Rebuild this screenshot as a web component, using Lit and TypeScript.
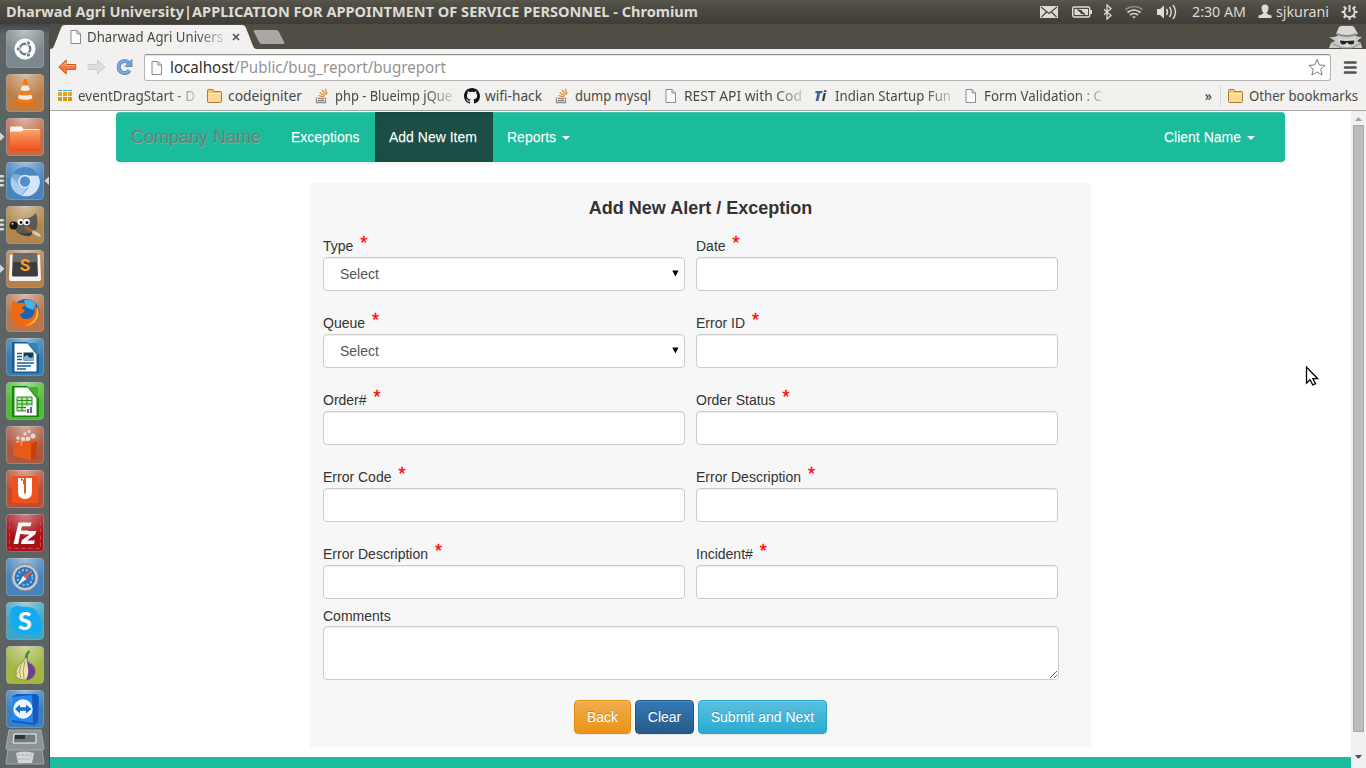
import { LitElement, html, css, svg, nothing, TemplateResult } from 'lit';
import { customElement, property } from 'lit/decorators.js';

/** Text run set to an exact width, used by the desktop and browser chrome. */
const run = (text: string, width: number, cls: string, tail = '') => html`
  <svg class="run ${cls}" width=${width} height="20">
    <text x="0" y="15" textLength=${width} lengthAdjust="spacingAndGlyphs">${text}${tail ? svg`<tspan class="tail">${tail}</tspan>` : nothing}</text>
  </svg>`;

const pageIcon = html`<svg width="16" height="16" viewBox="0 0 16 16"><path d="M3 1.500h6l3.500 3.500v9.500h-9.500z" fill="#fbfbfb" stroke="#8b8b8b"/><path d="M9 1.500v3.500h3.500" fill="none" stroke="#8b8b8b"/></svg>`;

const bookmarkIcons: Record<string, TemplateResult> = {
  page: pageIcon,
  grid: html`<svg width="16" height="16" viewBox="0 0 16 16"><g fill="#25a8dc"><path d="M1 2h4v1h-4zM6 2h4v1h-4zM11 2h4v1h-4z"/></g><g fill="#e3a81c"><path d="M1 4h4v4h-4zM6 4h4v4h-4zM11 4h4v4h-4z"/><path fill="#d39a0e" d="M1 9h4v4h-4zM6 9h4v4h-4zM11 9h4v4h-4z"/></g></svg>`,
  folder: html`<svg width="16" height="16" viewBox="0 0 16 16"><path d="M.5 13.500v-11q0-1 1-1h4q1 0 1 1v1h7q1 0 1 1v9q0 1-1 1h-12q-1 0-1-1z" fill="#f5c26f" stroke="#a97b35"/><path d="M1 6.500q0-1 1-1h12v8.500h-13z" fill="#fbd894"/><path d="M1 5.500h13" stroke="#ffeec6"/></svg>`,
  stack: html`<svg width="16" height="16" viewBox="0 0 16 16" fill="none"><path d="M2.500 9.500v5h9v-5" stroke="#8c8c8c" stroke-width="1.300"/><path d="M4 12.500h6" stroke="#777" stroke-width="1.200"/><path d="M4 10.200l6 .6" stroke="#9a8265" stroke-width="1.200"/><path d="M4.400 7.500l5.800 1.600" stroke="#c2864b" stroke-width="1.200"/><path d="M5.600 4.500l5.200 3.200M8 2l3.800 4.600M11.300.6l1.700 5.400" stroke="#f08a24" stroke-width="1.300"/></svg>`,
  github: html`<svg width="16" height="16" viewBox="0 0 16 16"><path fill="#161514" d="M8 0C3.580 0 0 3.580 0 8c0 3.540 2.290 6.530 5.470 7.590.4.070.55-.17.55-.38 0-.19-.01-.82-.01-1.490-2.010.37-2.530-.49-2.690-.94-.09-.23-.48-.94-.82-1.130-.28-.15-.68-.52-.01-.53.63-.01 1.080.58 1.230.82.72 1.210 1.870.87 2.330.66.070-.52.28-.87.510-1.070-1.780-.2-3.640-.89-3.640-3.950 0-.87.310-1.590.82-2.150-.08-.2-.36-1.020.08-2.120 0 0 .67-.21 2.200.82.640-.18 1.320-.27 2-.27s1.360.09 2 .27c1.530-1.040 2.200-.82 2.200-.82.440 1.100.16 1.920.08 2.120.510.56.82 1.270.82 2.150 0 3.070-1.870 3.750-3.650 3.950.290.25.540.73.540 1.480 0 1.070-.01 1.930-.01 2.200 0 .21.150.46.550.38A8.010 8.010 0 0 0 16 8c0-4.420-3.580-8-8-8z"/></svg>`,
  ti: html`<span class="ti"><b>T</b>i</span>`,
};

interface Bookmark { icon: string; text: string; width: number; cut?: boolean }
const bookmarks: Bookmark[] = [
  { icon: 'grid', text: 'eventDragStart - D', width: 117, cut: true },
  { icon: 'folder', text: 'codeigniter', width: 74 },
  { icon: 'stack', text: 'php - Blueimp jQue', width: 117, cut: true },
  { icon: 'github', text: 'wifi-hack', width: 57 },
  { icon: 'stack', text: 'dump mysql', width: 76 },
  { icon: 'page', text: 'REST API with Cod', width: 118, cut: true },
  { icon: 'ti', text: 'Indian Startup Fun', width: 116, cut: true },
  { icon: 'page', text: 'Form Validation : C', width: 118, cut: true },
];

interface Tile { bg: string; art: TemplateResult; marks?: number; active?: boolean }
const tiles: Tile[] = [
  { bg: '#78868b', art: svg`<circle cx="19" cy="19" r="10.500" fill="#fff"/><circle cx="19" cy="19" r="5.200" fill="none" stroke="#6f7c81" stroke-width="2.400"/><g fill="#6f7c81" stroke="#fff" stroke-width="1"><circle cx="12.200" cy="19" r="2.100"/><circle cx="22.400" cy="13" r="2.100"/><circle cx="22.400" cy="25" r="2.100"/></g>` },
  { bg: '#b97a42', art: svg`<path d="M8 27h22l2 4.500h-26z" fill="#e96f0c"/><path d="M18 5h2.500l7 22q-8 4-16 0z" fill="#f27c12"/><path d="M16 11.500h6.500l1.500 4.500q-5 2-9.500 0z" fill="#ececec"/><path d="M13 20.500q6 2 12.300 0l1.200 3.700q-7 3-14.600 0z" fill="#ececec"/>` },
  { bg: '#bd6947', marks: 1, art: svg`<path d="M4 10q0-1.500 1.500-1.500h10l2 2.500h15q1.500 0 1.500 1.500v3h-30z" fill="#fff" opacity=".9"/><path d="M4 15q0-1.500 1.500-1.500h10l2-1.500h15.500q1.500 0 1.500 1.500l-.5 18q0 1.500-1.500 1.500h-27q-1.500 0-1.500-1.500z" fill="url(#fold)"/>` },
  { bg: '#4180bd', marks: 3, active: true, art: svg`<circle cx="19" cy="20" r="14" fill="#7eaede"/><path d="M5.500 15a14 14 0 0 0 10 18.600l5-8.200-7-2z" fill="#abcdef"/><path d="M19 13.500h13a14 14 0 0 1-16 20.200l7.500-9z" fill="#d3e5f8"/><path d="M7 12a14 14 0 0 1 25 1.500h-13z" fill="#4d88c5"/><circle cx="19" cy="19.500" r="6" fill="#4f8fd2" stroke="#dbeafb" stroke-width="1.700"/>` },
  { bg: '#ae8345', marks: 3, art: svg`<path d="M9 17l-3-1q9 1 13-4 6 1 11-5 3 10 0 17-6 7-15 4-6-2-7-8z" fill="#5c5a55"/><path d="M10 25q9 5 19 0l-5 5q-8 1-14-5z" fill="#403e3a"/><circle cx="14.500" cy="16" r="3" fill="#fff"/><circle cx="20.500" cy="16" r="3.300" fill="#fff"/><circle cx="15" cy="16.500" r="1.400"/><circle cx="21" cy="16.500" r="1.500"/><ellipse cx="7.500" cy="19.500" rx="4" ry="4" fill="#151515"/><circle cx="6.500" cy="17.800" r="1" fill="#ddd"/><path d="M19 21l9 5" stroke="#b5651d" stroke-width="2.500"/><path d="M27 24l7 4 1 3-4-1-5-3z" fill="#c9ccce"/>` },
  { bg: '#b87c44', marks: 1, art: svg`<path d="M4 5h30l1 24q0 2-2 2h-28q-2 0-2-2z" fill="#f4f4f4"/><path d="M7 3h24l1 22q0 1.500-1.500 1.500h-23q-1.500 0-1.500-1.500z" fill="#3d3d3d"/><path d="M7 3h24l.6 9h-25z" fill="#6a6a6a"/><text x="19" y="21" text-anchor="middle" font-family="Roboto" font-weight="700" font-size="17" fill="#ff9a2e">S</text>` },
  { bg: '#b9714a', art: svg`<circle cx="20" cy="18.500" r="13.500" fill="#1c63b4"/><path d="M18 6q7-2 12 4l-3 6-7-3z" fill="#47b5e9"/><path d="M6 10l1-5q2 4 6 4 5-1 8 2-5 1-5 4l3 1q-2 4-5 4 0 5 6 5 6 0 8-5 2-5-1-9 9 6 5 14-4 8-13 8-12 0-14-12-.500-6 1-11z" fill="#ee6a12"/><path d="M31 12q3 6 0 13-4 7-12 7 9-4 11-10 1-4 1-10z" fill="#fdbb2b"/>` },
  { bg: '#2f79ae', art: svg`<path d="M6 4h15l12 12v19h-27z" fill="#135a8e"/><path d="M8.500 5.500h13l9 11v17h-22z" fill="#fff"/><path d="M22 5h10v12z" fill="#2e84bb"/><path d="M11 15.500h5M11 18.500h5M11 21.500h5M11 25h17M11 28h14M11 31h9" stroke="#1a5d90" stroke-width="1.300"/><rect x="17.500" y="14.500" width="10" height="8" fill="#173951"/><path d="M18 19l3-2 3 3 3-1v3h-9z" fill="#7bb9dc"/>` },
  { bg: '#4bbb2f', art: svg`<path d="M6 4h15l12 12v19h-27z" fill="#14850e"/><path d="M8.500 5.500h13l9 11v17h-22z" fill="#fff"/><path d="M22 5h10v12z" fill="#43b22c"/><rect x="11" y="15" width="15" height="14" fill="#bfe4b2"/><path d="M11 15h15v14h-15zM11 18.500h15M11 22h15M11 25.500h15M16 15v14M21 15v14" fill="none" stroke="#278d1d"/><rect x="20" y="23.500" width="7" height="8" fill="#eee"/><path d="M21 31v-4h2v4z" fill="#d43b28"/><path d="M24 31v-6h2v6z" fill="#3a74c8"/>` },
  { bg: '#ab5439', art: svg`<g fill="#e3d8d3"><circle cx="12" cy="12" r="1.800"/><circle cx="19" cy="8" r="1.800"/><circle cx="23" cy="5.500" r="1.500"/><circle cx="27" cy="10" r="2.500"/><circle cx="17" cy="13" r="2.300"/><circle cx="22" cy="13" r="2.400"/><circle cx="12" cy="17" r="2"/></g><path d="M7 17l22-3 2 2-1 17-5 1-18-4z" fill="#e85a1a"/><path d="M25 18l6-3-1 18-5 1z" fill="#c4430c"/><path d="M15 20q0-7 5-5" fill="none" stroke="#fbb18a"/>` },
  { bg: '#bd472a', art: svg`<rect x="6" y="6" width="26" height="27" rx="1.500" fill="#f2501f"/><path d="M12 8v14q0 7 7 7t7-7v-14h-6v14q0 2-1 2t-1-2v-14z" fill="#fff"/><path d="M15 8l3 2v4h-1v-4l-2 1z" fill="#f2501f"/>` },
  { bg: '#a80a10', art: svg`<rect x="3.500" y="3.500" width="31" height="31" fill="none" stroke="#d85a5a" stroke-width=".8" stroke-dasharray="4 3"/><path d="M12.500 8.500h13l-1 3.700h-8.500l-1 4.300h7l-.8 3.500h-7l-2 10h-4.700z" fill="#fff"/><path d="M17.500 17h12.500l-.7 3.200-8 6.300h7.500l-.8 3.500h-13l.8-3.800 7.700-5.700h-6z" fill="#fff"/>` },
  { bg: '#3e80bd', art: svg`<circle cx="19" cy="19.500" r="13.500" fill="#c5c9cc" stroke="#787e83" stroke-width="1"/><circle cx="19" cy="19.500" r="10.500" fill="#2d74bd"/><circle cx="19" cy="19.500" r="7.500" fill="none" stroke="#91c3ea" stroke-width="2" stroke-dasharray="2 2"/><path d="M27 11l-6.500 10-3.500-3z" fill="#e95a36"/><path d="M11 28l6-10 3.500 3z" fill="#eef4f8"/>` },
  { bg: '#37a3c5', art: svg`<path d="M6 6q5-4 10-1 17-2 18 14 3 6-1 12-5 4-11 1-18 1-17-14-2-7 1-12z" fill="#11acef"/><text x="19" y="28" text-anchor="middle" font-family="Lato" font-weight="900" font-size="25" fill="#fff">S</text>` },
  { bg: '#a1b33c', art: svg`<path d="M19 12q0-5 4-8l1 2q-3 3-2 7z" fill="#3d8938"/><path d="M20 11q1 4 6 7 4 4 3 9-2 7-10 7-9 0-10-7 0-5 5-9 5-4 6-7z" fill="#e9e5a5" stroke="#7f7a43" stroke-width=".7"/><path d="M20 12q1 4 6 6.500 4 4 3 9-2 6-9 6.500 3-6 2-12-.500-5-2-10z" fill="#6c4290"/><path d="M18 14q-7 9-3 18M19 15q-3 9-1 18M17 15q-9 7-6 14" stroke="#9c9859" fill="none" stroke-width=".9"/>` },
  { bg: '#347bc0', art: svg`<path d="M6 6l5-2h20l2 3-1 25-4 3-22-3z" fill="#1559bd"/><path d="M6 7l20-2 1 28-21-3z" fill="#2688ee"/><circle cx="17" cy="19" r="9.700" fill="#eef5fc"/><path d="M9 19l5-4.500v2.800h6v-2.800l5.500 4.500-5.500 4.500v-2.800h-6v2.800z" fill="#1b6dcc"/>` },
];

@customElement('unity-launcher')
class UnityLauncher extends LitElement {
  static styles = css`
    :host { display: flex; flex-direction: column; width: 49px; border-right: 1px solid #43474a; background: linear-gradient(#424749, #5c6465 10px, #5c6363); box-sizing: content-box; overflow: hidden; padding-top: 6px; height: 738px; }
    .slot { height: 44px; flex: none; }
    .slot.last { height: 39px; }
    svg { display: block; }
  `;
  render() {
    return html`
      ${tiles.map((t, i) => html`<div class="slot ${i === 15 ? 'last' : ''}">
        <svg width="49" height="39" viewBox="-6 0 49 39">
          <defs>
            <radialGradient id="sheen" cx=".5" cy="0" r=".65"><stop offset="0" stop-color="#fff" stop-opacity=".5"/><stop offset="1" stop-color="#fff" stop-opacity=".03"/></radialGradient>
            <linearGradient id="fold" x2="0" y2="1"><stop offset="0" stop-color="#fda26a"/><stop offset="1" stop-color="#ee4d17"/></linearGradient>
          </defs>
          <rect x=".5" y=".5" width="37" height="37" rx="3.500" fill=${t.bg} stroke="#fff" stroke-opacity=".22"/>
          <rect width="38" height="38" rx="4" fill="url(#sheen)"/>
          ${t.art}
          ${t.marks === 1 ? svg`<path d="M-6 14.500l4.500 4.200-4.500 4.200z" fill="#d6d8d8"/>` : nothing}
          ${t.marks === 3 ? svg`<path d="M-6 13h3l1.500 1.200-1.500 1.200h-3zM-6 17.500h3l1.500 1.200-1.500 1.200h-3zM-6 22h3l1.500 1.200-1.500 1.200h-3z" fill="#d6d8d8"/>` : nothing}
          ${t.active ? svg`<path d="M43 14.500l-4.500 4.200 4.500 4.200z" fill="#d6d8d8"/>` : nothing}
        </svg></div>`)}
      <svg width="49" height="39" viewBox="0 0 49 39">
        <path d="M9 1h32l3 18q0 2-2 2h-34q-2 0-2-2z" fill="#8b9496" stroke="#a4acad"/>
        <path d="M14 5h22v9h-23z" fill="#717a7d" stroke="#f3f3f3"/><path d="M15 6h10v4h-10z" fill="#303638"/>
        <path d="M8 21h34l2 14h-38z" fill="#7d8789" stroke="#a0a7a8"/><path d="M16 24q8-3 18 0l-2 10h-14z" fill="#d3d5d6"/><path d="M17 26h15M18 30h13" stroke="#aaaeb0" stroke-dasharray="3 1"/>
      </svg>`;
  }
}

@customElement('form-field')
class FormField extends LitElement {
  @property() label = '';
  @property({ type: Boolean }) select = false;
  static styles = css`
    :host { display: block; font: 14px/20px "Liberation Sans", Arial, sans-serif; color: #333; }
    .label { display: flex; height: 20px; line-height: 18px; gap: 7px; }
    .star { color: #f00; font-size: 18px; line-height: 13px; -webkit-text-stroke: .3px #f00; }
    .box { position: relative; height: 34px; }
    .control { display: block; box-sizing: border-box; width: 100%; height: 34px; margin: 0; padding: 6px 16px; border: 1px solid #ccc; border-radius: 4px; background: #fff; box-shadow: inset 0 1px 1px rgba(0,0,0,.075); font: inherit; color: #555; appearance: none; outline: none; }
    .caret { position: absolute; right: 6px; top: 13px; }
  `;
  render() {
    return html`<div class="label"><span>${this.label}</span><span class="star">*</span></div>
      <div class="box">${this.select
        ? html`<select class="control"><option>Select</option></select><svg class="caret" width="7" height="7"><path d="M.3.500h6.200l-3.100 6z"/></svg>`
        : html`<input class="control" type="text">`}</div>`;
  }
}

const fields = [
  { label: 'Type', select: true }, { label: 'Date' },
  { label: 'Queue', select: true }, { label: 'Error ID' },
  { label: 'Order#' }, { label: 'Order Status' },
  { label: 'Error Code' }, { label: 'Error Description' },
  { label: 'Error Description' }, { label: 'Incident#' },
];

@customElement('app-root')
class AppRoot extends LitElement {
  static styles = css`
    :host { display: flex; flex-direction: column; width: 1366px; height: 768px; overflow: hidden; background: #fff; position: relative; font-family: "Liberation Sans", Arial, sans-serif; }
    svg { display: block; flex: none; }
    .run { overflow: visible; font-family: "Noto Sans", "Open Sans", sans-serif; font-size: 14px; fill: #4a4945; }
    .panel { display: flex; align-items: center; height: 24px; flex: none; padding: 0 8px 0 6px; background: linear-gradient(#5a584b, #504e45 4px, #3e3d38); gap: 12px; }
    .run.title { font-weight: 700; font-size: 13.500px; fill: #dfdbd2; }
    .run.light { fill: #dfdbd2; }
    .fill { flex: 1; }
    .user { display: flex; align-items: center; gap: 4px; }
    .desktop { display: flex; flex: 1; }
    .browser { display: flex; flex-direction: column; width: 1316px; }
    .tabs { display: flex; height: 25px; background: #504d45; }
    .tab { position: relative; width: 205px; height: 25px; display: flex; }
    .shape { position: absolute; left: 0; top: 0; }
    .inner { position: relative; display: flex; align-items: center; padding: 1px 0 0 18px; height: 24px; }
    .fade { -webkit-mask-image: linear-gradient(90deg, #000 calc(100% - 26px), rgba(0,0,0,.25)); mask-image: linear-gradient(90deg, #000 calc(100% - 26px), rgba(0,0,0,.25)); }
    .inner .fade { margin: 0 9px 0 3px; }
    .toolbar { display: flex; align-items: center; height: 36px; background: #f2f1f0; padding: 0 7px 0 8px; }
    .toolbar .nav { margin-right: 10px; }
    .omnibox { display: flex; align-items: center; box-sizing: border-box; width: 1187px; height: 27px; border: 1px solid #b5b3b0; border-top-color: #949290; border-radius: 3px; background: #fff; padding: 0 4px; margin: 1px 12px 0 1px; box-shadow: inset 0 1px 1px #e4e4e4; }
    .run.url { font-size: 16px; fill: #2f2f2f; margin-left: 5px; }
    .tail { fill: #949494; }
    .marks { display: flex; align-items: center; box-sizing: border-box; height: 26px; background: #f2f1f0; border-bottom: 1px solid #a9a7a4; padding: 0 8px 4px 7px; gap: 12px; }
    .mark { display: flex; align-items: center; gap: 5px; }
    .ti { width: 16px; font: italic bold 14px/16px "Open Sans", sans-serif; color: #333; }
    .ti b { color: #3b63a4; }
    .more { font: 14px/16px "Noto Sans", sans-serif; color: #333; margin-right: -4px; }
    .sep { width: 1px; height: 21px; background: #d3d9df; margin-right: -5px; }
    .view { display: flex; flex: 1; height: 657px; }
    .page { display: flex; flex-direction: column; width: 1301px; padding-top: 1px; }
    .navbar { display: flex; margin: 0 66px; width: 1169px; height: 50px; background: #1bbc9b; border-radius: 4px; box-shadow: inset 0 1px 0 rgba(255,255,255,.15), 0 1px 5px rgba(0,0,0,.075); text-shadow: 0 1px 0 rgba(255,255,255,.25); font-size: 14px; line-height: 20px; color: #fff; box-sizing: border-box; padding-right: 15px; }
    .brand { padding: 15px; font-size: 18px; color: #777; width: 130px; white-space: nowrap; }
    .item { display: flex; align-items: center; padding: 0 15px 0 14px; height: 50px; gap: 6px; box-sizing: border-box; white-space: nowrap; }
    .item.first { padding: 0 0 0 15px; width: 99px; }
    .item.on { width: 118px; background: #1b4f45; box-shadow: inset 0 3px 9px rgba(0,0,0,.075); }
    .caret { border: 4px solid transparent; border-top-color: #fff; border-bottom: 0; margin-top: 2px; }
    .card { box-sizing: border-box; width: 781px; height: 564px; margin: 21px 0 0 260px; background: #f7f7f7; padding: 14px 13px 13px; color: #333; font-size: 14px; line-height: 20px; }
    .heading { margin: 0 0 20px; font-size: 18px; line-height: 22px; height: 20px; text-align: center; font-weight: bold; }
    .grid { display: grid; grid-template-columns: 362px 362px; column-gap: 11px; row-gap: 23px; }
    .comments { margin-top: 7px; }
    .comments textarea { display: block; box-sizing: border-box; width: 736px; height: 54px; border: 1px solid #ccc; border-radius: 4px; margin: 0; background: #fff; box-shadow: inset 0 1px 1px rgba(0,0,0,.075); outline: none; }
    .buttons { display: flex; justify-content: center; gap: 4px; margin-top: 20px; }
    .btn { box-sizing: border-box; height: 34px; padding: 6px 0; border: 1px solid; border-radius: 4px; color: #fff; font: 14px/20px "Liberation Sans", Arial, sans-serif; text-shadow: 0 -1px 0 rgba(0,0,0,.2); box-shadow: inset 0 1px 0 rgba(255,255,255,.15), 0 1px 1px rgba(0,0,0,.075); }
    .back { width: 57px; background: linear-gradient(#f0ad4e, #eb9316); border-color: #e38d13; }
    .clear { width: 59px; background: linear-gradient(#337ab7, #265a88); border-color: #245580; }
    .submit { width: 129px; background: linear-gradient(#5bc0de, #2aabd2); border-color: #28a4c9; }
    .footer { height: 11px; margin-top: 10px; background: #1bbc9b; }
    .scroll { display: flex; flex-direction: column; align-items: center; justify-content: flex-start; width: 15px; background: #f1f1f1; box-sizing: border-box; padding: 5px 2px 4px; }
    .thumb { width: 11px; height: 607px; box-sizing: border-box; background: #bcbcbc; border: 1px solid #a8a8a8; margin: 3px 0 22px; }
    .cursor { position: absolute; left: 1305px; top: 365px; }
  `;

  render() {
    return html`
      <div class="panel">
        ${run('Dharwad Agri University|APPLICATION FOR APPOINTMENT OF SERVICE PERSONNEL - Chromium', 692, 'title')}
        <div class="fill"></div>
        <svg width="20" height="18" viewBox="0 0 20 18"><path d="M0 3h18v12h-18z" fill="#dfdbd2"/><path d="M1 4l8 6.500 8-6.500M1.500 14l5-5M16.500 14l-5-5" fill="none" stroke="#4a4841" stroke-width="1.200"/></svg>
        <svg width="20" height="18" viewBox="0 0 20 18"><rect x=".7" y="4" width="17" height="10" rx="1.500" fill="none" stroke="#dfdbd2" stroke-width="1.400"/><path d="M18 7h2v4h-2zM2.500 6h13.500v6h-13.500z" fill="#dfdbd2"/><path d="M5.500 6.800l4 .8.5 1.200 3 2.400-4-.8-.5-1.200z" stroke="#45433d" stroke-width="1" fill="#45433d"/></svg>
        <svg width="9" height="18" viewBox="2 0 9 18"><path d="M1 5.500l8 7-4 3.500v-14l4 3.500-8 7" fill="none" stroke="#dfdbd2" stroke-width="1.300"/></svg>
        <svg width="20" height="18" viewBox="0 0 20 18" fill="none" stroke="#dfdbd2" stroke-width="1.700"><path d="M.5 6.500q8.500-6 17 0" opacity=".45"/><path d="M2.500 9.500q6.500-5 13 0"/><path d="M5 12q4-3 8 0"/><path d="M7 13.500h4l-2 2z" fill="#dfdbd2" stroke="none"/></svg>
        <svg width="23" height="18" viewBox="0 0 23 18"><path d="M0 6h3l4-3.500v13l-4-3.500h-3z" fill="#dfdbd2"/><g fill="none" stroke="#dfdbd2" stroke-width="1.400"><path d="M9.500 6q2 3 0 6M12.500 4q3.500 5 0 10M16 2q5 7 0 14"/></g></svg>
        ${run('2:30 AM', 54, 'light')}
        <div class="user"><svg width="14" height="18" viewBox="0 0 14 18"><path d="M3.500 5q0-3.500 3.500-3.500t3.500 3.500q0 3-2 5 1 1.500 5 2.500v2.500h-13v-2.500q4-1 5-2.500-2-2-2-5z" fill="#dfdbd2"/></svg>${run('sjkurani', 53, 'light')}</div>
        <svg width="17" height="18" viewBox="0 0 17 18" fill="none" stroke="#dfdbd2"><path d="M5.500 4.700a5.200 5.200 0 1 0 6 0M8.500 2v7" stroke-width="1.900"/><path d="M2.700 3.500l2 2M14.300 3.500l-2 2M.5 9h2.500M14 9h2.500M2.700 14.700l2-2M14.300 14.700l-2-2M8.500 14.500v2.500" stroke-width="2"/></svg>
      </div>
      <div class="desktop">
        <unity-launcher></unity-launcher>
        <div class="browser">
          <div class="tabs">
            <div class="tab">
              <svg class="shape" width="236" height="25" viewBox="0 0 236 25"><path d="M0 25q3 0 4-3l7-18q1-3 4-3h177q3 0 4 3l7 18q1 3 4 3z" fill="#f2f1f0"/><path d="M204 8q-1-2 1-2h21q2 0 3 2l5 10q1 2-1 2h-21q-2 0-3-2z" fill="#aaa8a4"/></svg>
              <div class="inner">${pageIcon}<div class="fade">${run('Dharwad Agri Univers', 136, '')}</div>
                <svg width="8" height="8" viewBox="0 0 8 8"><path d="M1 1l6 6M7 1l-6 6" stroke="#555" stroke-width="1.700"/></svg></div>
            </div>
            <div class="fill"></div>
            <svg width="37" height="25" viewBox="0 0 37 25"><path d="M0 24l2-5 4-2-6-4q7 1 10-3l14 0q3 3 9 3l-5 4 4 2 1 5z" fill="#c9c9c7"/><path d="M7 10l3-7q2-2 8-1 6-1 7 1l4 7q-11 5-22 0z" fill="#d9d9d7"/><path d="M8 9q10 4 19 0v2q-9 4-19 0z" fill="#8c8c88"/><path d="M9 14q9 3 17 0l-2 6-6 4-7-4z" fill="#dededc"/><path d="M11 16.500l6 .5 8-.5q1 4-3 4-3 0-4-2.500-1.500 3-4 2.500-3 0-3-4z" fill="#252525"/><path d="M4 20l9 4h10l9-5" fill="none" stroke="#8b8b88"/></svg>
          </div>
          <div class="toolbar">
            <svg class="nav" width="19" height="18" viewBox="0 0 19 18"><path d="M.7 9l7.500-7v4.500h9.500v5h-9.500v4.500z" fill="#f07b3e" stroke="#c95b24" stroke-linejoin="round"/><path d="M3 8.500l4.500-4v3h9" fill="none" stroke="#f9b184"/></svg>
            <svg class="nav" width="19" height="18" viewBox="0 0 19 18"><path d="M18 9l-7.500-7v4.500h-9.500v5h9.500v4.500z" fill="#dedddc" stroke="#cfcecd" stroke-linejoin="round"/></svg>
            <svg class="nav" width="17" height="18" viewBox="0 0 17 18"><path d="M13.500 12.500a6 6 0 1 1-.5-7.500" fill="none" stroke="#4a82be" stroke-width="4"/><path d="M13.500 12.300a6 6 0 1 1-.5-7.300" fill="none" stroke="#75aadf" stroke-width="2.500"/><path d="M16 1.500v7h-7z" fill="#6da4dc" stroke="#4a82be" stroke-width=".8"/></svg>
            <div class="omnibox">${pageIcon}${run('localhost', 276, 'url', '/Public/bug_report/bugreport')}
              <div class="fill"></div>
              <svg width="18" height="19" viewBox="0 0 19 19"><path d="M9.500 1l2.400 5.800 6.200.5-4.700 4 1.500 6.200-5.400-3.300-5.400 3.300 1.500-6.200-4.700-4 6.200-.5z" fill="#fff" stroke="#777" stroke-linejoin="round"/></svg>
            </div>
            <svg width="14" height="14" viewBox="0 0 14 14"><path d="M2 2.500h10.500M2 7.500h10.500M2 12.500h10.500" stroke="#505050" stroke-width="2.600" stroke-linecap="round"/></svg>
          </div>
          <div class="marks">
            ${bookmarks.map(b => html`<div class="mark">${bookmarkIcons[b.icon]}<div class=${b.cut ? 'fade' : ''}>${run(b.text, b.width, '')}</div></div>`)}
            <div class="fill"></div>
            <span class="more">»</span>
            <div class="sep"></div>
            <div class="mark">${bookmarkIcons.folder}${run('Other bookmarks', 109, '')}</div>
          </div>
          <div class="view">
            <div class="page">
              <div class="navbar">
                <div class="brand">Company Name</div>
                <div class="item first">Exceptions</div>
                <div class="item on">Add New Item</div>
                <div class="item">Reports <span class="caret"></span></div>
                <div class="fill"></div>
                <div class="item">Client Name <span class="caret"></span></div>
              </div>
              <div class="card">
                <h3 class="heading">Add New Alert / Exception</h3>
                <div class="grid">${fields.map(f => html`<form-field .label=${f.label} .select=${!!f.select}></form-field>`)}</div>
                <div class="comments">Comments<textarea></textarea></div>
                <div class="buttons">
                  <button class="btn back">Back</button>
                  <button class="btn clear">Clear</button>
                  <button class="btn submit">Submit and Next</button>
                </div>
              </div>
              <div class="footer"></div>
            </div>
            <div class="scroll">
              <svg width="7" height="6"><path d="M0 5l3.500-4 3.500 4z" fill="#a3a3a3"/></svg>
              <div class="thumb"></div>
              <svg width="7" height="6"><path d="M0 1l3.500 4 3.500-4z" fill="#505050"/></svg>
            </div>
          </div>
        </div>
      </div>
      <svg class="cursor" width="15" height="22" viewBox="0 0 15 22"><path d="M1.500 2v16l3.500-3.300 2.800 5.300 2.700-1.300-2.600-5h4.800z" fill="#fff" stroke="#000" stroke-width="1.300"/></svg>
    `;
  }
}
